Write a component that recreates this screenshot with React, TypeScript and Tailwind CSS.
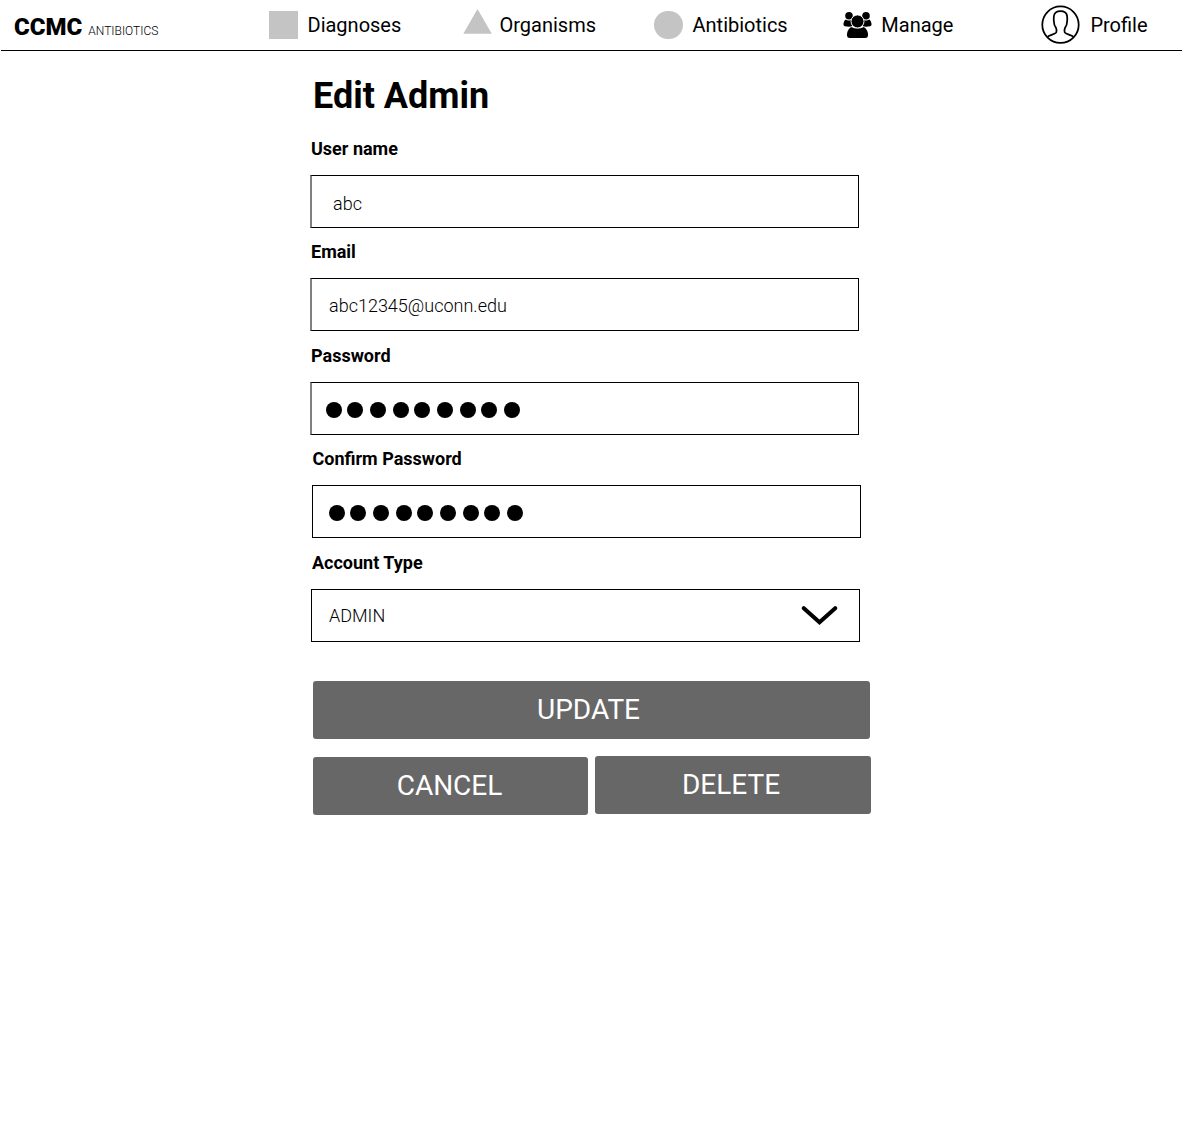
import type { ReactNode } from "react";

function NavItem({ className, label, labelClass, icon }: { className: string; label: string; labelClass: string; icon: ReactNode }) {
  return (
    <a className={`flex h-full shrink-0 items-start ${className}`}>
      {icon}
      <span className={`whitespace-nowrap pt-[13px] text-[20px] leading-6 ${labelClass}`}>{label}</span>
    </a>
  );
}

function PeopleIcon() {
  return (
    <svg className="mt-[11px] h-[28px] w-[29px] shrink-0" viewBox="0 0 29 28" fill="#000">
      <circle cx="6" cy="4.7" r="3.8" />
      <circle cx="23" cy="4.7" r="3.8" />
      <path d="M2.6 8.6 Q4 9.6 6 9.6 Q7.2 9.6 8 9.1 Q7.4 12.8 9.4 15 Q6.6 16.2 1.8 15.2 Q0.3 14.8 0.4 13 Q0.8 10 2.6 8.6Z" />
      <path d="M26.4 8.6 Q25 9.6 23 9.6 Q21.8 9.6 21 9.1 Q21.6 12.8 19.6 15 Q22.4 16.2 27.2 15.2 Q28.7 14.8 28.6 13 Q28.2 10 26.4 8.6Z" />
      <path d="M8.2 15.9 Q11 17.5 14.5 17.5 Q18 17.5 20.8 15.9 Q23.2 17.2 24.4 20.2 Q25.2 22.5 25 24.8 Q24.7 27 22.4 27 L6.6 27 Q4.3 27 4 24.8 Q3.8 22.5 4.6 20.2 Q5.8 17.2 8.2 15.9Z" />
      <circle cx="14.5" cy="10.4" r="6.5" stroke="#fff" strokeWidth="0.9" />
    </svg>
  );
}

function ProfileIcon() {
  return (
    <svg className="mt-[5px] h-[40px] w-[40px] shrink-0" viewBox="0 0 40 40" fill="none" stroke="#000" strokeWidth="1.75" strokeLinejoin="round">
      <circle cx="19.5" cy="19.7" r="18.2" />
      <path d="M6.6 31.8 C8.6 29.8 14.4 29.2 15.3 27.4 C15.9 26.1 15.6 24.3 15 22.9 C13.4 21 12.9 18.6 12.9 16.6 C12.6 14.6 12.7 12.6 12.9 11 C13.4 7.6 16 6.2 19.5 6.2 C23 6.2 25.6 7.6 26.1 11 C26.3 12.6 26.4 14.6 26.1 16.6 C26.1 18.6 25.6 21 24 22.9 C23.4 24.3 23.1 26.1 23.7 27.4 C24.6 29.2 30.4 29.8 32.4 31.8" />
    </svg>
  );
}

function Field({ label, labelClass = "", className = "", boxClass, children }: { label: string; labelClass?: string; className?: string; boxClass: string; children: ReactNode }) {
  return (
    <div className={`w-[549px] ${className}`}>
      <label className={`block text-[18px] leading-6 font-bold ${labelClass}`}>{label}</label>
      <div className={`flex items-center border border-black text-[18px] font-light ${boxClass}`}>{children}</div>
    </div>
  );
}

function Dots() {
  return (
    <div className="flex">
      {["mr-[5px]", "mr-[7px]", "mr-[7px]", "mr-[5px]", "mr-[7px]", "mr-[7px]", "mr-[5px]", "mr-[7px]", ""].map((m, i) => (
        <span key={i} className={`size-4 rounded-full bg-black ${m}`} />
      ))}
    </div>
  );
}

export default function App() {
  return (
    <div className="h-[1131px] w-[1182px] overflow-hidden bg-white font-['Roboto',sans-serif] text-black">
      <header className="ml-px flex h-[51px] border-b border-black">
        <div className="flex w-[268px] items-baseline pt-[11px] pl-[13px]">
          <span className="text-[24px] leading-8 font-black">CCMC</span>
          <span className="ml-[6px] text-[12px] leading-8 font-light">ANTIBIOTICS</span>
        </div>
        <NavItem className="w-[194px]" label="Diagnoses" labelClass="ml-[9.5px]" icon={<span className="mt-[11px] h-7 w-[29px] bg-[#c4c4c4]" />} />
        <NavItem
          className="w-[191px]"
          label="Organisms"
          labelClass="ml-[7.5px]"
          icon={<svg className="mt-[9px] h-[25px] w-[29px]" viewBox="0 0 29 25"><path d="M14.5 0 L28.8 24.7 H.3Z" fill="#c4c4c4" /></svg>}
        />
        <NavItem className="w-[189px]" label="Antibiotics" labelClass="ml-[9.5px]" icon={<span className="mt-[11px] h-7 w-[29px] rounded-full bg-[#c4c4c4]" />} />
        <NavItem className="w-[198px]" label="Manage" labelClass="ml-[9.3px]" icon={<PeopleIcon />} />
        <NavItem className="" label="Profile" labelClass="ml-[9.4px]" icon={<ProfileIcon />} />
      </header>
      <main className="ml-[310px] w-[561px]">
        <h1 className="pt-[23px] pl-[3px] text-[36px] leading-[44px] font-bold">Edit Admin</h1>
        <Field className="mt-[19px]" label="User name" labelClass="pl-px" boxClass="mt-[14px] h-[53px] border-l-2 border-l-[#808080] pt-[4px] pl-[21px]">abc</Field>
        <Field className="mt-3" label="Email" labelClass="pl-px" boxClass="mt-[14px] h-[53px] border-l-2 border-l-[#808080] pt-[2px] pl-[17px]">abc12345@uconn.edu</Field>
        <Field className="mt-[13px]" label="Password" labelClass="pl-px" boxClass="mt-[14px] h-[53px] border-l-2 border-l-[#808080] pt-[3px] pl-[14px]"><Dots /></Field>
        <Field className="mt-3 ml-[2px]" label="Confirm Password" labelClass="pl-[0.5px]" boxClass="mt-[14px] h-[53px] pt-[2px] pl-4"><Dots /></Field>
        <Field className="mt-[13px] ml-px" label="Account Type" labelClass="pl-px" boxClass="mt-[14px] h-[53px] justify-between pr-[21px] pl-[17px]">
          <span>ADMIN</span>
          <svg className="h-5 w-[37px]" viewBox="0 0 37 20" fill="none" stroke="#000" strokeWidth="4" strokeLinecap="round">
            <path d="M2.8 2.2 L18.5 16.3 L34.2 2.2" />
          </svg>
        </Field>
        <button className="mt-[39px] ml-[3px] block h-[58px] w-[557px] rounded-[3px] bg-[#676767] pr-[6px] text-[28px] text-white">UPDATE</button>
        <div className="mt-[17px] ml-[3px] flex gap-[7px]">
          <button className="mt-px h-[58px] w-[275px] rounded-[3px] bg-[#676767] pr-[2px] text-[28px] text-white">CANCEL</button>
          <button className="h-[58px] w-[276px] rounded-[3px] bg-[#676767] pr-[4px] text-[28px] text-white">DELETE</button>
        </div>
      </main>
    </div>
  );
}
